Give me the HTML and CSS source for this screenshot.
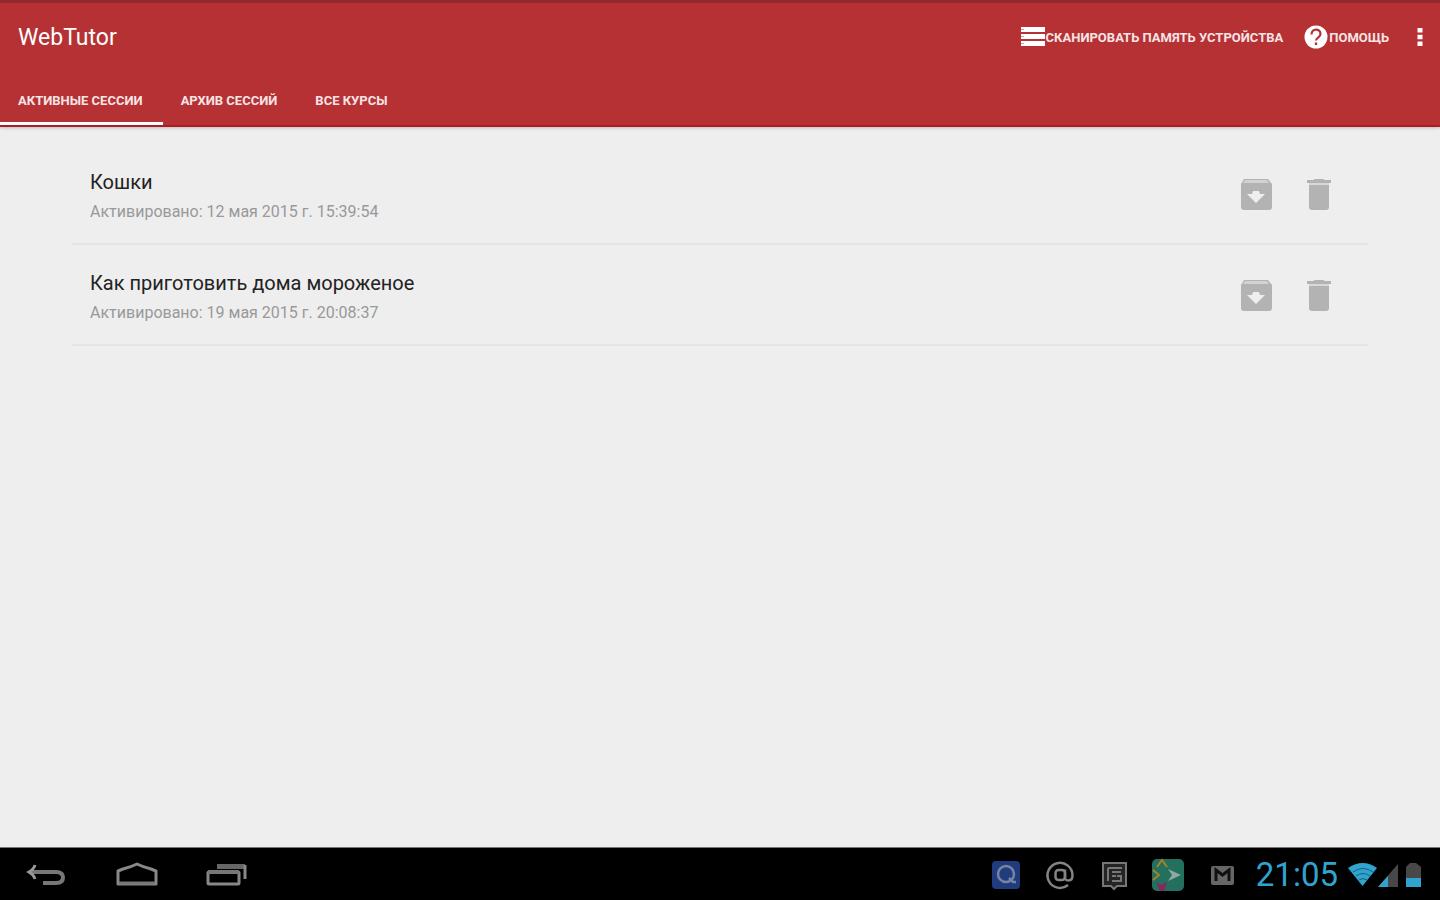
FILE: index.html
```html
<!DOCTYPE html>
<html lang="ru">
<head>
<meta charset="utf-8">
<title>WebTutor</title>
<link rel="stylesheet" href="styles.css">
</head>
<body>
<header class="header">
  <div class="appbar">
    <h1 class="brand">WebTutor</h1>
    <button class="action" type="button">
      <svg width="26" height="24" viewBox="0 0 26 24" aria-hidden="true"><path fill="#fff" d="M1 2h24v5H1zM1 9h24v5H1zM1 16h24v5H1z"/><path fill="#dc9a9c" d="M1 4h3v1H1zM1 11h3v1H1zM1 18h3v1H1z"/></svg>
      <span>СКАНИРОВАТЬ ПАМЯТЬ УСТРОЙСТВА</span>
    </button>
    <button class="action" type="button">
      <svg width="26" height="24" viewBox="0 0 26 24" aria-hidden="true"><circle cx="13" cy="12" r="11.5" fill="#fff"/><path fill="none" stroke="#b53134" stroke-width="2.2" d="M8.500 9.500C8.500 3 17.500 3 17.500 9c0 3.500-4.500 3.500-4.500 6.500"/><path fill="#b53134" d="M11.800 17.500h2.400v2.400h-2.400z"/></svg>
      <span>ПОМОЩЬ</span>
    </button>
    <button class="more" type="button" aria-label="Ещё">
      <svg width="6" height="20" viewBox="0 0 6 20" aria-hidden="true"><path fill="#fff" d="M.5 1h5v4.500h-5zM.5 7.700h5v4.500h-5zM.5 14.400h5v4.500h-5z"/></svg>
    </button>
  </div>
  <nav class="tabs">
    <a class="tab tab-active" href="#active">АКТИВНЫЕ СЕССИИ</a>
    <a class="tab" href="#archive">АРХИВ СЕССИЙ</a>
    <a class="tab" href="#courses">ВСЕ КУРСЫ</a>
  </nav>
</header>

<main class="content">
  <ul class="sessions">
    <li class="session">
      <div class="info">
        <h2 class="name">Кошки</h2>
        <p class="date">Активировано: 12 мая 2015 г. 15:39:54</p>
      </div>
      <button class="tool" type="button" aria-label="В архив">
        <svg width="32" height="34" viewBox="0 0 32 34" aria-hidden="true"><path fill="#b3b3b3" d="M4 1h24l4 5v23q0 3-3 3H4q-3 0-3-3V6z"/><path fill="#d2d2d2" d="M5 2h22l2 3H3z"/><path fill="#eee" d="M13 13h6l1 3h5l-9 9-9-9h5z"/></svg>
      </button>
      <button class="tool" type="button" aria-label="Удалить">
        <svg width="32" height="34" viewBox="0 0 32 34" aria-hidden="true"><path fill="#b3b3b3" d="M4 2h6l2-1h8l2 1h6v3H4zM6 7h20v22q0 3-3 3H9q-3 0-3-3z"/><path fill="#d8d8d8" d="M6 5h20v2H6z"/></svg>
      </button>
    </li>
    <li class="session">
      <div class="info">
        <h2 class="name">Как приготовить дома мороженое</h2>
        <p class="date">Активировано: 19 мая 2015 г. 20:08:37</p>
      </div>
      <button class="tool" type="button" aria-label="В архив">
        <svg width="32" height="34" viewBox="0 0 32 34" aria-hidden="true"><path fill="#b3b3b3" d="M4 1h24l4 5v23q0 3-3 3H4q-3 0-3-3V6z"/><path fill="#d2d2d2" d="M5 2h22l2 3H3z"/><path fill="#eee" d="M13 13h6l1 3h5l-9 9-9-9h5z"/></svg>
      </button>
      <button class="tool" type="button" aria-label="Удалить">
        <svg width="32" height="34" viewBox="0 0 32 34" aria-hidden="true"><path fill="#b3b3b3" d="M4 2h6l2-1h8l2 1h6v3H4zM6 7h20v22q0 3-3 3H9q-3 0-3-3z"/><path fill="#d8d8d8" d="M6 5h20v2H6z"/></svg>
      </button>
    </li>
  </ul>
</main>

<footer class="system">
  <div class="nav-keys">
    <button class="key" type="button" aria-label="Назад">
      <svg width="42" height="28" viewBox="0 0 42 28" fill="none" stroke="#777" aria-hidden="true"><path stroke-width="4" d="M6 11h24q7 0 7 5.500T30 22H17"/><path stroke="#999" stroke-width="3" d="M9 4q-1 4-6 7 5 3 6 7"/></svg>
    </button>
    <button class="key" type="button" aria-label="Домой">
      <svg width="42" height="28" viewBox="0 0 42 28" fill="none" stroke="#888" stroke-width="3" stroke-linejoin="round" aria-hidden="true"><path d="M2 23V10l5-2Q15 6 21 3q6 3 14 5l5 2v13z"/><path stroke="#777" d="M3 22h36"/></svg>
    </button>
    <button class="key" type="button" aria-label="Недавние">
      <svg width="42" height="28" viewBox="0 0 42 28" fill="none" aria-hidden="true"><rect x="2" y="11" width="31" height="12" rx="1" stroke="#888" stroke-width="3"/><path stroke="#777" stroke-width="4" d="M2 11h31"/><path stroke="#666" stroke-width="5" d="M11 5.500h28"/><path stroke="#888" stroke-width="3" d="M39 4v14"/></svg>
    </button>
  </div>
  <div class="tray">
    <svg width="34" height="34" viewBox="0 0 34 34" aria-hidden="true"><rect x="3" y="3" width="28" height="28" rx="4" fill="#203c7c"/><circle cx="17" cy="16" r="8" fill="none" stroke="#7884a2" stroke-width="2.500"/><path fill="none" stroke="#7884a2" stroke-width="2.500" d="M20 20l4 4h3"/></svg>
    <svg width="34" height="34" viewBox="0 0 34 34" fill="none" stroke="#848484" stroke-width="2.500" aria-hidden="true"><path d="M25 27A12.500 12.500 0 1 1 29.500 17.500q0 5-4 5t-3.500-4v-7"/><rect x="12.500" y="12" width="9.500" height="10" rx="3"/></svg>
    <svg width="34" height="34" viewBox="0 0 34 34" fill="none" stroke="#777" stroke-width="2" aria-hidden="true"><path fill="#242424" d="M6 5h23v23H20l-3 3-3-3H6z"/><path d="M11 10v13M11 10h14M15 14h9M15 18h4M15 23h9v-5h-4"/></svg>
    <svg width="34" height="34" viewBox="0 0 34 34" aria-hidden="true"><rect x="1" y="1" width="32" height="32" rx="5" fill="#23705e"/><path fill="none" stroke="#a38228" stroke-width="2" d="M6 9l5-7 5 7M2 12l6 5-6 5"/><path fill="#8b255c" d="M5 24l5 3 6-3-3 9h-4z"/><path fill="#91a7a1" d="M17 11l13 6-13 6 4-6z"/></svg>
    <svg width="34" height="34" viewBox="0 0 34 34" aria-hidden="true"><rect x="6" y="8" width="23" height="19" rx="2" fill="#666"/><path fill="none" stroke="#111" stroke-width="3" d="M11 23V12l6.500 5L24 12v11"/></svg>
  </div>
  <time class="clock">21:05</time>
  <svg class="status" width="76" height="30" viewBox="0 0 76 30" aria-hidden="true"><path fill="#30a4cf" d="M0 8q15-10 29 0L14.500 26z"/><path fill="none" stroke="#126080" stroke-width="1" d="M5 12q10-7 20 0M8 16q7-5 14 0M11 20q4-3 8 0"/><path fill="#484848" d="M50 4v23H30z"/><path fill="#30a4cf" d="M40 16v11H30z"/><path fill="#484848" d="M58 7l4-4h6l5 4v20H58z"/><path fill="#30a4cf" d="M58 18h15v9H58z"/></svg>
</footer>
</body>
</html>
```
FILE: styles.css
```css
* {
  box-sizing: border-box;
}

body {
  margin: 0;
  min-height: 100vh;
  display: flex;
  flex-direction: column;
  background: #eee;
  font-family: Roboto, "Liberation Sans", sans-serif;
}

h1, h2, p, ul {
  margin: 0;
  padding: 0;
  font-weight: 400;
}

button {
  border: 0;
  padding: 0;
  background: none;
  color: inherit;
  font: inherit;
}

svg {
  display: block;
  flex: none;
}

.header {
  background: #b53134;
  color: #fff;
  border-top: 3px solid #94282d;
  border-bottom: 2px solid #ad1c22;
  box-shadow: 0 1px 3px #bbb;
}

.appbar {
  display: flex;
  align-items: center;
  height: 68px;
  padding: 0 17px 0 18px;
}

.brand {
  margin-right: auto;
  padding-top: 2px;
  font-size: 23px;
  line-height: 28px;
}

.action {
  display: flex;
  align-items: center;
  margin-right: 20px;
  font-size: 13px;
  font-weight: 700;
  color: #f8e4e4;
}

.more {
  margin-left: 8px;
}

.tabs {
  display: flex;
  height: 54px;
}

.tab {
  display: flex;
  align-items: center;
  padding: 8px 20px 0 18px;
  border-bottom: 3px solid transparent;
  color: #f8e4e4;
  font-size: 13px;
  font-weight: 700;
  text-decoration: none;
}

.tab-active {
  border-bottom-color: #fff;
}

.content {
  flex: 1;
  padding: 17px 5%;
}

.sessions {
  list-style: none;
}

.session {
  display: flex;
  align-items: center;
  gap: 31px;
  padding: 23px 33px 20px 18px;
  border-bottom: 2px solid #e4e4e4;
}

.info {
  flex: 1;
}

.name {
  font-size: 20px;
  line-height: 30px;
  color: #222;
}

.date {
  padding-top: 4px;
  font-size: 16px;
  line-height: 22px;
  color: #999;
}

.system {
  display: flex;
  align-items: center;
  height: 53px;
  padding: 2px 16px 0 26px;
  background: #000;
  border-top: 1px solid #777;
}

.nav-keys {
  display: flex;
  gap: 48px;
  margin-right: auto;
}

.tray {
  display: flex;
  gap: 20px;
}

.clock {
  padding: 0 10px 0 17px;
  color: #30a4cf;
  font-size: 33px;
  line-height: 40px;
}
```
